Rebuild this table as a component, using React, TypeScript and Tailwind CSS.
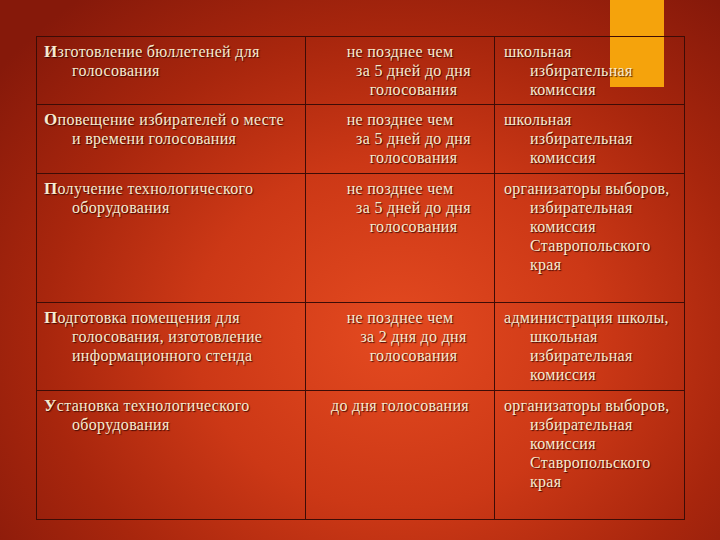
import React from "react";

type Row = {
  height: string;
  task: string[];
  when: string[];
  who: string[];
};

const rows: Row[] = [
  {
    height: "h-[68px]",
    task: ["Изготовление бюллетеней для", "голосования"],
    when: ["не позднее чем", "за 5 дней до дня", "голосования"],
    who: ["школьная", "избирательная", "комиссия"],
  },
  {
    height: "h-[69px]",
    task: ["Оповещение избирателей о месте", "и времени голосования"],
    when: ["не позднее чем", "за 5 дней до дня", "голосования"],
    who: ["школьная", "избирательная", "комиссия"],
  },
  {
    height: "h-[129px]",
    task: ["Получение технологического", "оборудования"],
    when: ["не позднее чем", "за 5 дней до дня", "голосования"],
    who: ["организаторы выборов,", "избирательная", "комиссия", "Ставропольского", "края"],
  },
  {
    height: "h-[88px]",
    task: ["Подготовка помещения для", "голосования, изготовление", "информационного стенда"],
    when: ["не позднее чем", "за 2 дня до дня", "голосования"],
    who: ["администрация школы,", "школьная", "избирательная", "комиссия"],
  },
  {
    height: "h-[129px]",
    task: ["Установка технологического", "оборудования"],
    when: ["до дня голосования"],
    who: ["организаторы выборов,", "избирательная", "комиссия", "Ставропольского", "края"],
  },
];

// first line flush, the rest shifted by the hanging indent
function Lines({ lines, center, indent }: { lines: string[]; center?: boolean; indent: string }) {
  return (
    <>
      {lines.map((l, i) => (
        <div key={i} className={[center ? "text-center" : "", i > 0 ? indent : ""].join(" ")}>
          {l}
        </div>
      ))}
    </>
  );
}

function TaskLines({ lines }: { lines: string[] }) {
  return (
    <>
      {lines.map((l, i) =>
        i === 0 ? (
          <div key={i}>
            <span className="text-[17px] font-bold">{l[0]}</span>
            {l.slice(1)}
          </div>
        ) : (
          <div key={i} className="pl-[28px]">
            {l}
          </div>
        )
      )}
    </>
  );
}

export default function App() {
  return (
    <div className="relative h-[540px] w-[720px] overflow-hidden bg-[radial-gradient(ellipse_70%_80%_at_55%_62%,#e44a20_0%,#cc3816_40%,#a8260d_70%,#86190a_100%)] font-['Liberation_Serif','Times_New_Roman',serif] text-[16px] leading-[19px] tracking-[0.3px] text-[#f6ebd0] [text-shadow:1px_1px_1px_rgba(40,0,0,0.8)]">
      {/* accent bar */}
      <div className="absolute left-[610px] top-0 h-[87px] w-[54px] bg-[#f5a30c]" />

      <div className="relative pl-[36px] pt-[36px]">
        <table className="table-fixed border-collapse">
          <colgroup>
            <col className="w-[269px]" />
            <col className="w-[189px]" />
            <col className="w-[190px]" />
          </colgroup>
          <tbody>
            {rows.map((r, i) => (
              <tr key={i} className={r.height}>
                <td className="border border-[#3d0c06] px-[7px] pt-[5px] align-top">
                  <TaskLines lines={r.task} />
                </td>
                <td className="border border-[#3d0c06] pt-[5px] align-top">
                  <Lines lines={r.when} center indent="pl-[27px]" />
                </td>
                <td className="border border-[#3d0c06] pl-[9px] pt-[5px] align-top">
                  <Lines lines={r.who} indent="pl-[26px]" />
                </td>
              </tr>
            ))}
          </tbody>
        </table>
      </div>
    </div>
  );
}
